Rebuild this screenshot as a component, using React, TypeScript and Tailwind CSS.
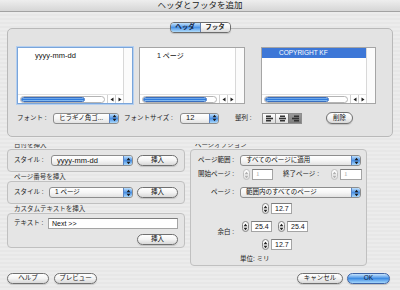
import React from 'react';

const Arrows = ({ color = '#1a1a1a' }: { color?: string }) => (
  <svg width="5" height="8" viewBox="0 0 5 8">
    <path d="M2.5 0.8 L4.4 3.2 H0.6 Z M2.5 7.2 L4.4 4.8 H0.6 Z" fill={color} />
  </svg>
);

const Tri = ({ left }: { left?: boolean }) => (
  <svg width="4" height="5" viewBox="0 0 4 5">
    <path d={left ? 'M0.5 2.5 L3.5 0.5 V4.5 Z' : 'M3.5 2.5 L0.5 0.5 V4.5 Z'} fill="#222" />
  </svg>
);

const Popup = ({ text, className = '', latin = false }: { text: string; className?: string; latin?: boolean }) => (
  <div className={`flex h-[11px] overflow-hidden rounded-[3px] border border-[#8d8d8d] bg-gradient-to-b from-white via-[#f6f6f6] to-[#e2e2e2] ${className}`}>
    <div className={`flex flex-1 items-center truncate pl-[5px] leading-none text-[#111] ${latin ? 'text-[7.5px]' : 'text-[6.5px]'}`}>{text}</div>
    <div className="flex w-[9px] items-center justify-center rounded-r-[2px] border-l border-[#5a85c6] bg-gradient-to-b from-[#bfe0fb] via-[#4b91e4] to-[#a9d8fb]">
      <Arrows />
    </div>
  </div>
);

const Btn = ({ children, className = '' }: { children: React.ReactNode; className?: string }) => (
  <div className={`flex h-[11px] items-center justify-center rounded-full border border-[#707070] bg-gradient-to-b from-white via-[#f3f3f3] to-[#d8d8d8] text-[6.5px] leading-none text-[#111] shadow-[0_1px_1px_rgba(0,0,0,0.15)] ${className}`}>
    {children}
  </div>
);

const HScroll = () => (
  <div className="flex h-[9px] items-center border-t border-[#e2e2e2] pl-[2px]">
    <div className="flex h-[7px] flex-1 overflow-hidden rounded-full border border-[#b4b4b4] bg-white">
      <div className="h-full w-[64px] rounded-full border border-[#3b6fbf] bg-gradient-to-b from-[#8cbdf0] via-[#2f7bdc] to-[#a6d6fa]" />
    </div>
    <div className="ml-[2px] flex h-full w-[8px] items-center justify-center border-l border-[#d0d0d0]">
      <Tri left />
    </div>
    <div className="flex h-full w-[8px] items-center justify-center border-l border-[#d0d0d0]">
      <Tri />
    </div>
  </div>
);

const ListBox = ({ className, focused, children }: { className: string; focused?: boolean; children: React.ReactNode }) => (
  <div className={`flex h-[57px] bg-white ${focused ? 'border border-[#7aa5da] shadow-[0_0_0_1px_#b4cff0]' : 'border border-[#a5a5a5]'} ${className}`}>
    <div className="flex flex-1 flex-col">
      <div className="flex-1">{children}</div>
      <HScroll />
    </div>
    <div className="w-[9px] border-l border-[#d8d8d8] bg-[#fbfbfb]" />
  </div>
);

const Stepper = ({ disabled }: { disabled?: boolean }) => (
  <div className={`flex h-[11px] w-[7px] items-center justify-center rounded-full border bg-gradient-to-b from-white to-[#e4e4e4] ${disabled ? 'border-[#c0c0c0]' : 'border-[#858585]'}`}>
    <Arrows color={disabled ? '#b0b0b0' : '#222'} />
  </div>
);

const Field = ({ value, className, disabled }: { value: string; className: string; disabled?: boolean }) => (
  <div className={`flex h-[11px] items-center border border-[#a4a4a4] border-t-[#7c7c7c] bg-white pl-[3px] text-[7px] leading-none ${disabled ? "font-['Liberation_Serif',serif] text-[#a8a8a8]" : 'text-[#111]'} ${className}`}>
    {value}
  </div>
);

const AlignIcon = ({ kind }: { kind: 'l' | 'c' | 'r' }) => {
  const x = kind === 'l' ? [2, 2, 2] : kind === 'c' ? [3, 2, 3] : [4, 2, 4];
  return (
    <svg width="11" height="9" viewBox="0 0 11 9">
      <rect x={x[0]} y="1.5" width="5" height="1.6" fill="#333" />
      <rect x={x[1]} y="3.7" width="7" height="1.6" fill="#333" />
      <rect x={x[2]} y="5.9" width="5" height="1.6" fill="#333" />
    </svg>
  );
};

const Label = ({ children, className = '' }: { children: React.ReactNode; className?: string }) => (
  <div className={`shrink-0 text-[6.5px] leading-none text-[#222] ${className}`}>{children}</div>
);

export default function App() {
  return (
    <div className="relative h-[290px] w-[400px] overflow-hidden bg-[repeating-linear-gradient(180deg,#ececec_0px,#ececec_2px,#e7e7e7_2px,#e7e7e7_4px)] font-['Liberation_Sans','Noto_Sans_CJK_JP',sans-serif] text-[#222]">
      {/* title bar */}
      <div className="flex h-[12px] items-center justify-center border-b border-[#a2a2a2] bg-gradient-to-b from-[#eeeeee] to-[#d6d6d6] text-[8.5px] leading-none text-[#222]">
        ヘッダとフッタを追加
      </div>

      {/* tab view */}
      <div className="flex flex-col items-center">
        <div className="relative z-10 mt-[10px] flex h-[11px] w-[61px] overflow-hidden rounded-[4px] border border-[#6d6d6d] text-[6.5px] font-bold leading-none shadow-[0_1px_1px_rgba(0,0,0,0.15)]">
          <div className="flex flex-1 items-center justify-center border-r border-[#5f7fb0] bg-gradient-to-b from-[#c3e2fb] via-[#4d95e6] to-[#b2ddfb] text-[#102040]">ヘッダ</div>
          <div className="flex flex-1 items-center justify-center bg-gradient-to-b from-white via-[#f3f3f3] to-[#dadada] text-[#222]">フッタ</div>
        </div>
        <div className="-mt-[5px] h-[109px] w-[386px] self-start ml-[7px] rounded-[5px] border border-[#b9b9b9] bg-[#e3e3e3]">
          <div className="flex pl-[9px] pt-[18px]">
            <ListBox className="w-[116px]" focused>
              <div className="pl-[17px] pt-[3px] text-[7.5px] leading-[9px] text-[#111]">yyyy-mm-dd</div>
            </ListBox>
            <ListBox className="ml-[6px] w-[106px]">
              <div className="pl-[17px] pt-[3px] text-[7px] leading-[9px] text-[#111]">1 ページ</div>
            </ListBox>
            <ListBox className="ml-[16px] w-[115px]">
              <div className="flex h-[10px] items-center bg-[#3d77d7] pl-[17px] text-[6.5px] leading-none text-white">COPYRIGHT KF</div>
            </ListBox>
          </div>
          <div className="mt-[8px] flex items-center pl-[9px]">
            <Label className="w-[36px]">フォント :</Label>
            <Popup text="ヒラギノ角ゴ..." className="w-[66px]" />
            <Label className="ml-[5px] w-[56px]">フォントサイズ :</Label>
            <Popup text="12" latin className="w-[39px]" />
            <Label className="ml-[16px] w-[27px]">整列 :</Label>
            <div className="flex h-[11px] w-[40px] border border-[#8f8f8f]">
              <div className="flex flex-1 items-center justify-center bg-gradient-to-b from-white to-[#dcdcdc]"><AlignIcon kind="l" /></div>
              <div className="flex flex-1 items-center justify-center border-l border-[#9a9a9a] bg-gradient-to-b from-white to-[#dcdcdc]"><AlignIcon kind="c" /></div>
              <div className="flex flex-1 items-center justify-center border-l border-[#777] bg-gradient-to-b from-[#9a9a9a] to-[#7c7c7c]"><AlignIcon kind="r" /></div>
            </div>
            <Btn className="ml-[24px] h-[12px] w-[27px]">削除</Btn>
          </div>
        </div>
      </div>

      {/* lower section */}
      <div className="mt-[7px] flex items-start px-[7px]">
        {/* left column */}
        <div className="flex w-[178px] flex-col">
          <div className="h-[5px] overflow-hidden pl-[7px] text-[6.5px] leading-[9px] text-[#333]">
            <div className="-mt-[4px]">日付を挿入</div>
          </div>
          <div className="flex h-[23px] items-center rounded-[4px] border border-[#c0c0c0] bg-[#e5e5e5] px-[6px]">
            <Label className="w-[37px]">スタイル :</Label>
            <Popup text="yyyy-mm-dd" latin className="w-[82px]" />
            <Btn className="ml-[4px] w-[41px]">挿入</Btn>
          </div>
          <div className="flex h-[9px] items-end pl-[7px] text-[6.5px] leading-none text-[#333]">
            <span className="pb-[1px]">ページ番号を挿入</span>
          </div>
          <div className="flex h-[23px] items-center rounded-[4px] border border-[#c0c0c0] bg-[#e5e5e5] px-[6px]">
            <Label className="w-[35px]">スタイル :</Label>
            <Popup text="1 ページ" className="w-[84px]" />
            <Btn className="ml-[4px] w-[41px]">挿入</Btn>
          </div>
          <div className="flex h-[9px] items-end pl-[7px] text-[6.5px] leading-none text-[#333]">
            <span className="pb-[1px]">カスタムテキストを挿入</span>
          </div>
          <div className="flex flex-col rounded-[4px] border border-[#c0c0c0] bg-[#e5e5e5] px-[6px] pb-[2px] pt-[4px]">
            <div className="flex items-center">
              <Label className="w-[34px]">テキスト :</Label>
              <Field value="Next >>" className="w-[130px]" />
            </div>
            <div className="mt-[5px] flex justify-end">
              <Btn className="w-[41px]">挿入</Btn>
            </div>
          </div>
        </div>

        {/* right column */}
        <div className="ml-[5px] flex w-[177px] flex-col">
          <div className="h-[5px] overflow-hidden pl-[5px] text-[6.5px] leading-[9px] text-[#333]">
            <div className="-mt-[4px]">ページオプション</div>
          </div>
          <div className="flex h-[117px] flex-col rounded-[4px] border border-[#c0c0c0] bg-[#e5e5e5]">
            <div className="mt-[5px] flex items-center">
              <Label className="w-[43px] text-right">ページ範囲 :</Label>
              <Popup text="すべてのページに適用" className="ml-[6px] w-[121px]" />
            </div>
            <div className="mt-[3px] flex items-center">
              <Label className="w-[43px] text-right">開始ページ :</Label>
              <div className="ml-[9px]"><Stepper disabled /></div>
              <Field value="1" disabled className="ml-[2px] w-[21px]" />
              <Label className="ml-[10px] w-[48px]">終了ページ :</Label>
              <Stepper disabled />
              <Field value="1" disabled className="ml-[2px] w-[22px]" />
            </div>
            <div className="mt-[7px] flex items-center">
              <Label className="w-[43px] text-right">ページ :</Label>
              <Popup text="範囲内のすべてのページ" className="ml-[6px] w-[121px]" />
            </div>
            <div className="mt-[5px] flex items-center pl-[71px]">
              <Stepper />
              <Field value="12.7" className="ml-[2px] w-[21px]" />
            </div>
            <div className="mt-[7px] flex items-center">
              <Label className="w-[43px] translate-y-[6px] text-right">余白 :</Label>
              <div className="ml-[8px]"><Stepper /></div>
              <Field value="25.4" className="ml-[2px] w-[21px]" />
              <div className="ml-[6px]"><Stepper /></div>
              <Field value="25.4" className="ml-[2px] w-[21px]" />
            </div>
            <div className="mt-[7px] flex items-center pl-[71px]">
              <Stepper />
              <Field value="12.7" className="ml-[2px] w-[21px]" />
            </div>
            <div className="mt-[6px] pl-[49px] text-[6.5px] leading-none text-[#222]">単位: ミリ</div>
          </div>
        </div>
      </div>

      {/* bottom buttons */}
      <div className="mt-[7px] flex items-center justify-between pl-[7px] pr-[10px]">
        <div className="flex">
          <Btn className="w-[42px]">ヘルプ</Btn>
          <Btn className="ml-[5px] w-[43px]">プレビュー</Btn>
        </div>
        <div className="flex">
          <Btn className="w-[46px]">キャンセル</Btn>
          <div className="ml-[4px] flex h-[11px] w-[43px] items-center justify-center rounded-full border border-[#3f64a6] bg-gradient-to-b from-[#c6e4fc] via-[#3e8de3] to-[#a3d6fb] text-[6.5px] leading-none text-[#0d1d3a] shadow-[0_1px_1px_rgba(0,0,0,0.2)]">
            OK
          </div>
        </div>
      </div>
    </div>
  );
}
